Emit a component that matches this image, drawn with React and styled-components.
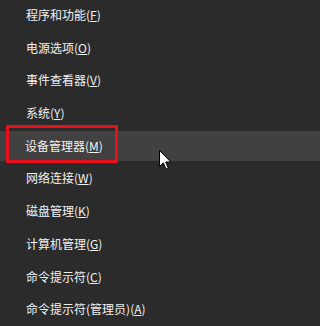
import React from "react";
import styled, { createGlobalStyle } from "styled-components";

const Global = createGlobalStyle`
  html, body { margin: 0; padding: 0; background: #2b2b2b; }
  body { height: 326px; overflow: hidden; }
`;

const Menu = styled.div`
  position: relative;
  width: 100%;
  min-width: 205px;
  height: 326px;
  background: #2b2b2b;
  display: flex;
  flex-direction: column;
  gap: 2.7px;
  font-family: "Noto Sans CJK SC", "Microsoft YaHei", sans-serif;
  font-size: 12px;
  color: #f2f2f2;
`;

const Row = styled.div`
  position: relative;
  height: 30px;
  flex: none;
  display: flex;
  align-items: center;
  padding-left: ${(p) => (p.$hot ? 25 : 26)}px;
  background: ${(p) => (p.$hot ? "#414141" : "transparent")};
  white-space: nowrap;
  line-height: 30px;
`;

const Key = styled.span`
  text-decoration: underline;
  text-underline-offset: 1px;
  text-decoration-thickness: 1px;
`;

const RedBox = styled.div`
  position: absolute;
  left: 6px;
  top: -5.5px;
  width: 112px;
  height: 38px;
  box-sizing: border-box;
  border: 3.5px solid #e8101a;
  border-radius: 1px;
  pointer-events: none;
`;

const Cursor = styled.svg`
  position: absolute;
  left: 158.5px;
  top: 149.5px;
`;

const items = [
  ["程序和功能", "F"],
  ["电源选项", "O"],
  ["事件查看器", "V"],
  ["系统", "Y"],
  ["设备管理器", "M"],
  ["网络连接", "W"],
  ["磁盘管理", "K"],
  ["计算机管理", "G"],
  ["命令提示符", "C"],
  ["命令提示符(管理员)", "A"],
];

export default function App() {
  return (
    <>
      <Global />
      <Menu>
        {items.map(([label, key], i) => (
          <Row key={i} $hot={i === 4}>
            {label}(<Key>{key}</Key>)
            {i === 4 && <RedBox />}
          </Row>
        ))}
        <Cursor width="13" height="21" viewBox="0 0 13 21">
          <path
            d="M0.5 0.5 L0.5 16.5 L4.3 12.8 L7 19.2 L9.3 18.2 L6.7 12 L11.8 12 Z"
            fill="#ffffff"
            stroke="#000000"
            strokeWidth="1"
            strokeLinejoin="miter"
          />
        </Cursor>
      </Menu>
    </>
  );
}
